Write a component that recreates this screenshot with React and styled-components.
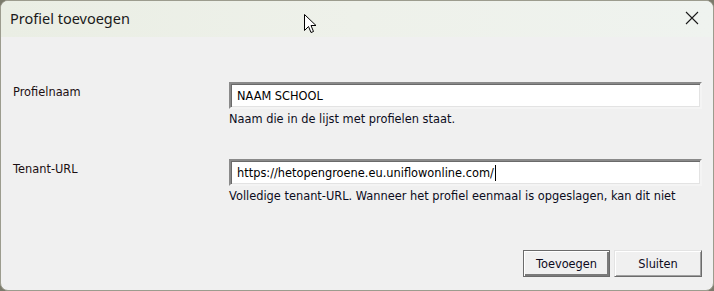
import React from "react";
import styled, { createGlobalStyle } from "styled-components";

const Global = createGlobalStyle`
  html, body { margin: 0; padding: 0; background: #7b7b6c; }
  #root { width: 714px; height: 291px; }
`;

const Window = styled.div`
  position: relative;
  box-sizing: border-box;
  width: 714px;
  height: 291px;
  border: 1px solid #9c9c8e;
  border-radius: 8px;
  overflow: hidden;
  background: #f0f0f0;
  display: flex;
  flex-direction: column;
  font-family: "DejaVu Sans", Verdana, sans-serif;
  font-size: 11.4px;
  color: #000;
`;

const TitleBar = styled.div`
  height: 36px;
  flex: none;
  display: flex;
  align-items: center;
  justify-content: space-between;
  padding: 0 14px 0 9px;
  background: linear-gradient(90deg, #eaeee4 0%, #eef1ea 50%, #eff3ef 100%);
`;

const Title = styled.div`
  font-family: "Noto Sans", "Open Sans", sans-serif;
  font-size: 14.5px;
  color: #1a1a1a;
  margin-top: -2px;
`;

const CloseButton = styled.div`
  width: 14px;
  height: 14px;
  display: flex;
  margin-top: -2px;
`;

const Body = styled.div`
  flex: 1;
  display: flex;
  flex-direction: column;
  padding: 45px 11px 0 12px;
`;

const Form = styled.div`
  display: grid;
  grid-template-columns: 216px 1fr;
  row-gap: 33px;
`;

const Label = styled.div`
  padding-top: 3px;
  line-height: 14px;
  color: #1c0f12;
`;

const Field = styled.div`
  display: flex;
  flex-direction: column;
`;

const Input = styled.div`
  box-sizing: border-box;
  height: 27px;
  background: #fff;
  border-style: solid;
  border-width: 2px;
  border-color: #8a8a8a #f4f4f4 #f4f4f4 #8a8a8a;
  box-shadow: inset 1px 1px 0 #6a6a6a, inset -1px -1px 0 #e3e3e3;
  display: flex;
  align-items: center;
  padding: 0 6px;
  line-height: 14px;
  color: #000;
`;

const Caret = styled.span`
  display: inline-block;
  width: 1px;
  height: 16px;
  background: #000;
  vertical-align: -4px;
  margin-left: 1px;
`;

const Help = styled.div`
  margin-top: 3px;
  line-height: 14px;
  color: #0c0c1c;
  white-space: nowrap;
`;

const Buttons = styled.div`
  margin-top: 47px;
  display: flex;
  justify-content: flex-end;
  gap: 4px;
`;

const Button = styled.div`
  box-sizing: border-box;
  width: ${(p) => (p.$default ? 87 : 88)}px;
  height: 27px;
  display: flex;
  align-items: center;
  justify-content: center;
  background: #f0f0f0;
  border: 1px solid;
  border-color: ${(p) =>
    p.$default ? "#6b6b6b" : "#e3e3e3 #6b6b6b #6b6b6b #e3e3e3"};
  box-shadow: ${(p) =>
    p.$default
      ? "inset 1px 1px 0 #ffffff, inset -2px -2px 0 #7a7a7a"
      : "inset 1px 1px 0 #ffffff, inset -1px -1px 0 #a0a0a0"};
  color: #0d0a1d;
`;

const Cursor = styled.svg`
  position: absolute;
  left: 303px;
  top: 13px;
`;

export default function App() {
  return (
    <>
      <Global />
      <Window>
        <TitleBar>
          <Title>Profiel toevoegen</Title>
          <CloseButton>
            <svg width="14" height="14" viewBox="0 0 14 14">
              <path d="M1 1 L13 13 M13 1 L1 13" stroke="#1a1a1a" strokeWidth="1.1" />
            </svg>
          </CloseButton>
        </TitleBar>
        <Body>
          <Form>
            <Label>Profielnaam</Label>
            <Field>
              <Input>NAAM SCHOOL</Input>
              <Help>Naam die in de lijst met profielen staat.</Help>
            </Field>
            <Label>Tenant-URL</Label>
            <Field>
              <Input>
                <span>
                  https://hetopengroene.eu.uniflowonline.com/
                  <Caret />
                </span>
              </Input>
              <Help>
                Volledige tenant-URL. Wanneer het profiel eenmaal is opgeslagen, kan dit niet
              </Help>
            </Field>
          </Form>
          <Buttons>
            <Button $default>Toevoegen</Button>
            <Button>Sluiten</Button>
          </Buttons>
        </Body>
        <Cursor width="13" height="20" viewBox="0 0 13 20">
          <path
            d="M0.5 0.5 L0.5 16.5 L4.5 12.5 L7 18.5 L9.5 17.5 L7 11.5 L12 11.5 Z"
            fill="#fff"
            stroke="#000"
            strokeWidth="1"
            strokeLinejoin="miter"
          />
        </Cursor>
      </Window>
    </>
  );
}
